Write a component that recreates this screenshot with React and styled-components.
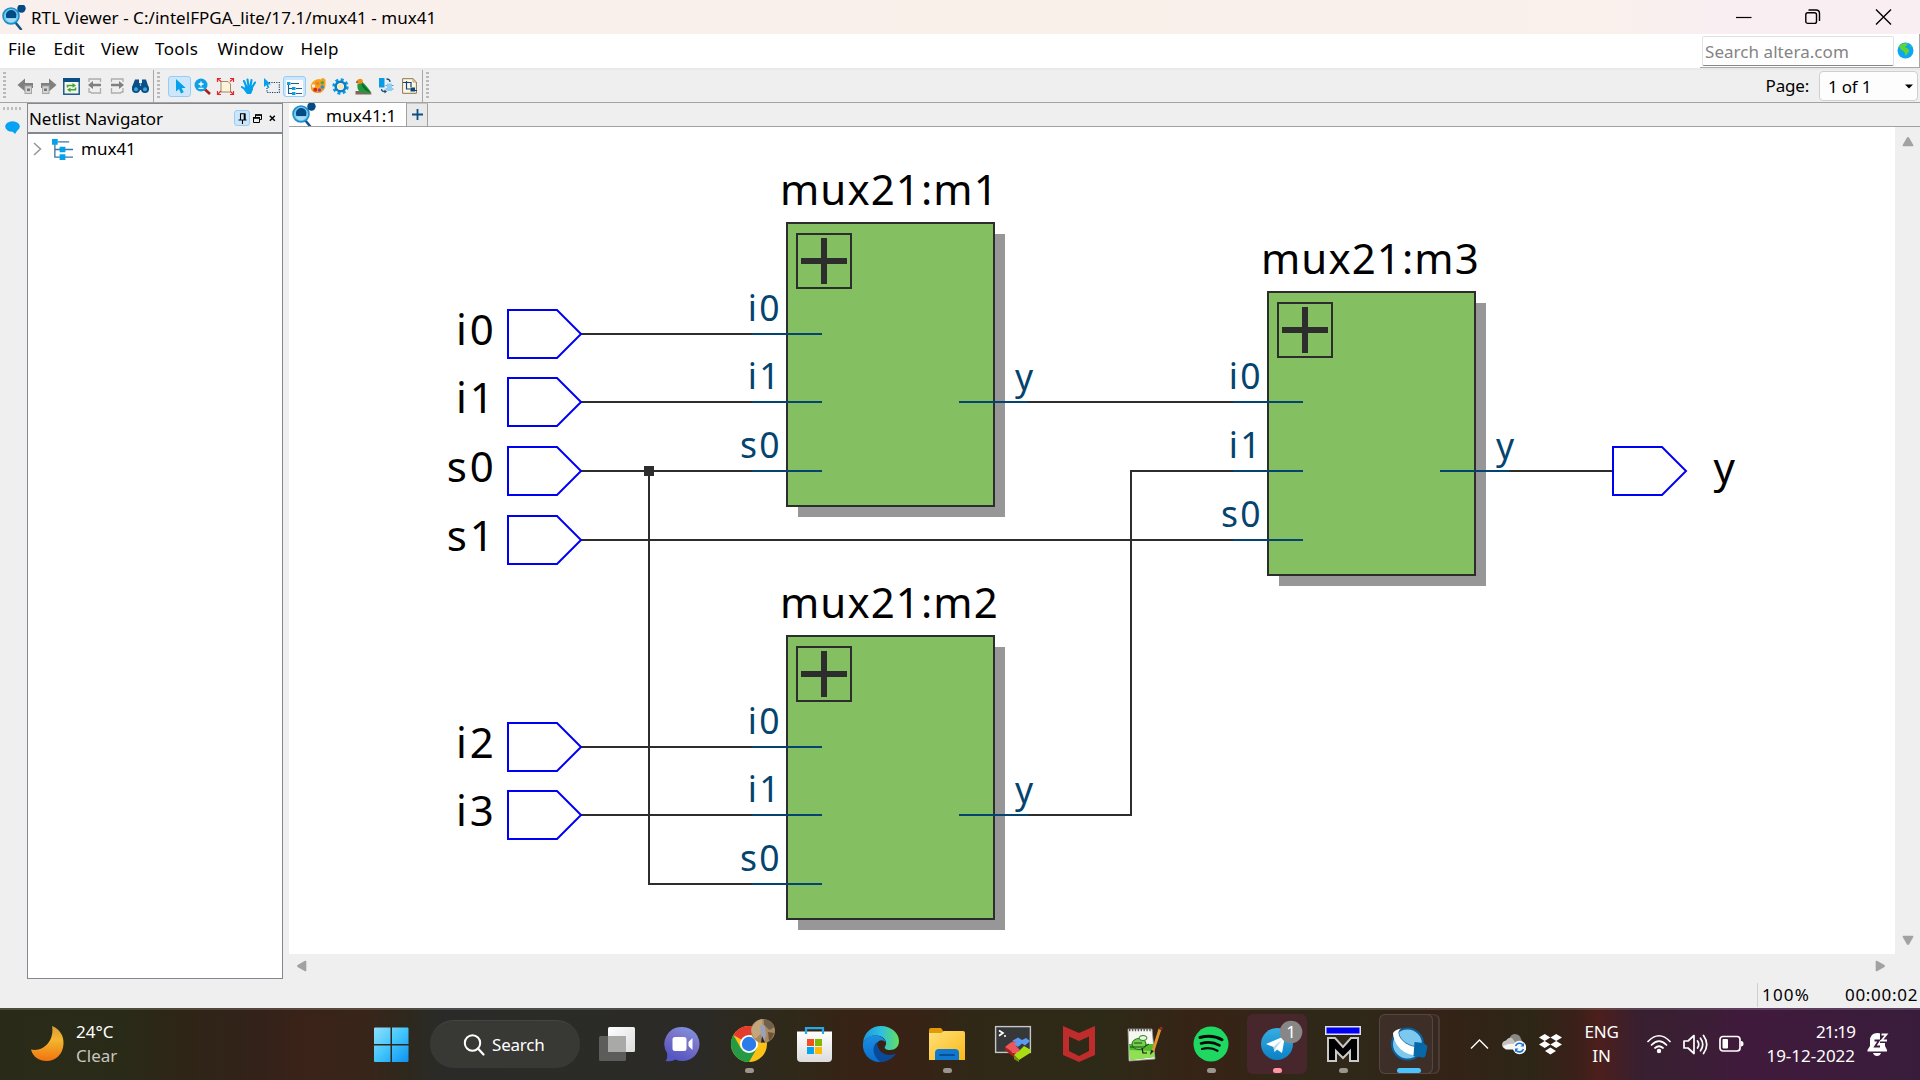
import React from "react";
import styled, { createGlobalStyle } from "styled-components";

const GlobalStyle = createGlobalStyle`
  * { box-sizing: border-box; }
  body { margin: 0; background: #efefef; overflow: hidden; }
`;

const Desktop = styled.div`
  width: 1920px;
  height: 1080px;
  display: flex;
  flex-direction: column;
  background: #efefef;
  color: #000;
  font-family: "Noto Sans", "Open Sans", sans-serif;
  font-size: 17px;
  line-height: 24px;
  white-space: pre;
  overflow: hidden;
  svg { display: block; flex: none; }
`;

/* ---------- title bar ---------- */
const TitleBar = styled.header`
  height: 34px;
  display: flex;
  align-items: center;
  padding: 1px 28px 0 2px;
  background: linear-gradient(90deg, #f9f0ed 0%, #faf0ea 55%, #faf0ec 84%, #f9eef2 90%, #f9eef2 100%);
`;
const Title = styled.h1`
  margin: 0 auto 0 4px;
  font-size: 17px;
  font-weight: 400;
  letter-spacing: 0.05px;
`;
const WindowControls = styled.div`
  display: flex;
  align-items: center;
  gap: 53px;
`;

/* ---------- menu bar ---------- */
const MenuBar = styled.nav`
  height: 36px;
  display: flex;
  justify-content: space-between;
  background: #fff;
  border-bottom: 2px solid #e9e9e9;
`;
const Menus = styled.div`
  display: flex;
  padding: 3px 0 0 8px;
`;
const MenuItem = styled.span`
  width: ${(p) => p.$w}px;
  letter-spacing: ${(p) => p.$ls || 0}px;
`;
const SearchArea = styled.div`
  width: 220px;
  height: 34px;
  display: flex;
  align-items: center;
  gap: 3px;
  padding: 0 0 0 2px;
  border-right: 1px solid #a8a8a8;
  border-bottom: 1px solid #a8a8a8;
`;
const SearchField = styled.div`
  width: 192px;
  height: 30px;
  padding: 3px 0 0 2px;
  color: #848484;
  line-height: 24px;
  letter-spacing: 0.05px;
  border: 1px solid #e2e2e2;
  border-bottom-color: #868686;
  border-radius: 2px;
`;

/* ---------- tool bar ---------- */
const ToolBar = styled.div`
  height: 33px;
  display: flex;
  border-bottom: 1px solid #a3a3a3;
`;
const ToolGroup = styled.div`
  display: flex;
  align-items: center;
  padding: 0 1px 0 3px;
  border-right: ${(p) => (p.$open ? "0" : "1px solid #a8a8a8")};
`;
const Grip = styled.i`
  width: 3px;
  height: 28px;
  margin-right: ${(p) => p.$after}px;
  background: repeating-linear-gradient(180deg, #b9b9b9 0 2px, transparent 2px 4px);
`;
const ToolButton = styled.div`
  width: 23px;
  height: 21px;
  display: grid;
  place-items: center;
  border-radius: 3px;
  border: 1px solid ${(p) => (p.$on ? "#99ccf5" : "transparent")};
  background: ${(p) => (p.$on ? "#cce6fb" : "transparent")};
`;
const PagePicker = styled.div`
  margin-left: auto;
  display: flex;
  align-items: center;
  gap: 10px;
  padding-right: 2px;
  letter-spacing: -0.2px;
`;
const PageSelect = styled.div`
  width: 99px;
  height: 30px;
  display: flex;
  align-items: center;
  justify-content: space-between;
  padding: 1px 4px 0 8px;
  background: #fdfdfd;
  border: 1px solid #cfcfcf;
  border-radius: 4px;
`;

/* ---------- work area ---------- */
const WorkArea = styled.main`
  height: 876px;
  display: flex;
`;
const Rail = styled.aside`
  width: 27px;
  padding: 4px 3px 0;
  display: flex;
  flex-direction: column;
  gap: 11px;
`;
const RailGrip = styled.i`
  width: 19px;
  height: 3px;
  background: repeating-linear-gradient(90deg, #bdbdbd 0 2px, transparent 2px 4px);
`;
const RailButton = styled.div`
  padding-left: 2px;
`;
const Dock = styled.section`
  width: 256px;
  margin-right: 6px;
  display: flex;
  flex-direction: column;
  background: #fff;
  border: 1px solid #828790;
`;
const DockHeader = styled.div`
  height: 30px;
  display: flex;
  align-items: center;
  padding: 1px 2px 0 1px;
  background: #efefef;
  border-bottom: 2px solid #828790;
  letter-spacing: -0.06px;
`;
const DockTitle = styled.span`
  margin-right: auto;
`;
const DockButton = styled.div`
  width: ${(p) => p.$w}px;
  height: 16px;
  display: grid;
  place-items: center;
  margin-bottom: 1px;
  border-radius: 3px;
  border: 1px solid ${(p) => (p.$on ? "#99ccf5" : "transparent")};
  background: ${(p) => (p.$on ? "#cce6fb" : "transparent")};
`;
const TreeRow = styled.div`
  height: 30px;
  display: flex;
  align-items: center;
  padding-left: 5px;
`;
const TreeIcon = styled.span`
  margin: 0 8px 0 10px;
`;
const Editor = styled.section`
  flex: 1;
  display: flex;
  flex-direction: column;
`;
const TabBar = styled.div`
  height: 24px;
  display: flex;
  border-bottom: 1px solid #a0a0a0;
`;
const Tab = styled.div`
  width: 118px;
  display: flex;
  align-items: center;
  padding: 2px 0 0 3px;
  gap: 9px;
  background: #fff;
  border-right: 1px solid #a0a0a0;
  letter-spacing: 0.2px;
  overflow: hidden;
`;
const AddTab = styled.div`
  width: 21px;
  display: grid;
  place-items: center;
  padding-bottom: 2px;
  background: #e9e9e9;
  border-right: 1px solid #a0a0a0;
  border-top: 1px solid #c4c4c4;
`;
const Viewport = styled.div`
  height: 827px;
  display: flex;
`;
const Canvas = styled.div`
  width: 1606px;
  background: #fff;
  text { font-family: "Noto Sans", "Open Sans", sans-serif; }
`;
const VScroll = styled.div`
  width: 25px;
  display: flex;
  flex-direction: column;
  align-items: center;
  justify-content: space-between;
  padding: 9px 0 8px;
`;
const HScroll = styled.div`
  width: 1606px;
  height: 25px;
  display: flex;
  align-items: center;
  justify-content: space-between;
  padding: 0 9px 1px 7px;
`;
const StatusBar = styled.footer`
  height: 29px;
  display: flex;
  align-items: center;
  justify-content: flex-end;
  padding-top: 2px;
`;
const StatusCell = styled.span`
  width: ${(p) => p.$w}px;
  padding-left: 4px;
  letter-spacing: ${(p) => p.$ls || 0}px;
  border-left: 1px solid ${(p) => (p.$line ? "#cfcfcf" : "transparent")};
`;

/* ---------- task bar ---------- */
const TaskBar = styled.div`
  height: 72px;
  display: flex;
  align-items: center;
  color: #fff;
  border-top: 2px solid rgba(255, 255, 255, 0.16);
  background: linear-gradient(90deg,
    #292b18 0, #2a2a18 125px, #2e2516 180px, #33221a 260px, #3a2218 300px, #38251a 370px, #2e281d 405px,
    #2a2b28 440px, #2b2a27 690px, #2f2919 790px, #372315 850px, #382216 905px, #302817 970px,
    #2e2a18 1100px, #372315 1210px, #2f2818 1300px, #2f2818 1360px, #352217 1430px, #2d2616 1530px,
    #3a2019 1575px, #4c1f1c 1598px, #381f30 1640px, #3b1e35 1700px, #401a3c 1740px, #391c3b 1920px) 0 -2px / 100% 72px border-box;
`;
const Weather = styled.div`
  width: 374px;
  display: flex;
  align-items: center;
  padding: 0 0 3px 30px;
  gap: 11px;
`;
const Stack = styled.div`
  width: ${(p) => (p.$w ? p.$w + "px" : "auto")};
  display: flex;
  flex-direction: column;
  text-align: ${(p) => p.$align || "left"};
  letter-spacing: ${(p) => p.$ls || 0}px;
`;
const Muted = styled.span`
  color: #c8c6bd;
`;
const Tight = styled.span`
  letter-spacing: -0.9px;
`;
const SearchPill = styled.div`
  width: 150px;
  height: 48px;
  margin: 0 4px 2px 21px;
  display: flex;
  align-items: center;
  gap: 7px;
  padding-left: 33px;
  letter-spacing: -0.2px;
  border-radius: 24px;
  background: #383834;
  border-top: 1px solid #454541;
`;
const Apps = styled.div`
  display: flex;
  height: 70px;
`;
const AppCell = styled.div`
  width: 66px;
  height: 60px;
  margin: 4px 0 0;
  display: grid;
  justify-items: center;
  align-content: end;
`;
const AppTile = styled.div`
  width: 60px;
  height: 60px;
  display: grid;
  justify-items: center;
  align-content: end;
  gap: 6px;
  padding-bottom: 1px;
  border-radius: 6px;
  background: ${(p) => p.$bg || "transparent"};
`;
const StackedTile = styled(AppTile)`
  width: 54px;
  margin-right: 7px;
  border: 1px solid rgba(255, 255, 255, 0.12);
  box-shadow: 6px 0 0 -1px #372921, 7px 0 0 0 #4a3b33;
  padding: 0 0 0 6px;
`;
const Running = styled.i`
  width: ${(p) => p.$w || 9}px;
  height: 5px;
  border-radius: 3px;
  background: ${(p) => p.$c || "#9c958e"};
`;
const Tray = styled.div`
  flex: 1;
  display: flex;
  align-items: center;
  padding: 0 30px 0 28px;
`;
const TrayItem = styled.div`
  width: ${(p) => p.$w}px;
  margin-bottom: ${(p) => p.$lift || 2}px;
`;

/* ---------- icons ---------- */
const RtlIcon = ({ s = 25 }) => (
  <svg width={s} height={s} viewBox="0 0 25 25">
    <path d="M12 8L20 4" stroke="#12508a" strokeWidth="2" />
    <path d="M13 17l6.500 8" stroke="#12508a" strokeWidth="2.400" />
    <circle cx="19.500" cy="3.500" r="4.200" fill="#044a85" />
    <circle cx="9" cy="11" r="8" fill="#72c6ee" stroke="#1d8fc8" strokeWidth="1.600" />
    <path d="M4 11a5.200 5.200 0 0 1 10.400-1.500l-.4 3.500H4.400z" fill="#044a85" />
    <path d="M3.500 13.500a6 6 0 0 0 11 0z" fill="#a5ddf6" />
  </svg>
);
const BackIcon = ({ flip }) => (
  <svg width="17" height="16" viewBox="0 0 17 16" transform={flip ? "scale(-1 1)" : undefined}>
    <path d="M.5 7L8 .5v4.500h8v5H8v3.500z" fill="#808080" />
    <rect x="8" y="8" width="6.500" height="7.500" fill="#d4d4d4" stroke="#a6a6a6" />
    <rect x="10" y="10.500" width="3" height="2.500" fill="#777" />
  </svg>
);
const PageArrow = ({ flip }) => (
  <svg width="15" height="16" viewBox="0 0 15 16" transform={flip ? "scale(-1 1)" : undefined}>
    <path d="M2 4V1h11.500v3M2 10v4h1.500l1 1h9v-5" fill="none" stroke="#adadad" strokeWidth="1.300" />
    <path d="M1 7l5-4v2.700h8v2.600H6V11z" fill="#808080" />
  </svg>
);
const RefreshIcon = () => (
  <svg width="17" height="17" viewBox="0 0 17 17">
    <rect x=".8" y=".8" width="15.400" height="15.400" fill="#f3f8ee" stroke="#0b4f86" strokeWidth="1.400" />
    <rect width="17" height="4" fill="#0b4f86" />
    <path d="M4.500 9.500V7.500h6" fill="none" stroke="#46a035" strokeWidth="1.600" />
    <path d="M9.500 5l3.500 2.500-3.500 2.300z" fill="#46a035" />
    <path d="M12.500 9.500v2.300h-6" fill="none" stroke="#46a035" strokeWidth="1.600" />
    <path d="M7.500 9.500L4 11.800l3.500 2.400z" fill="#46a035" />
  </svg>
);
const BinocularsIcon = () => (
  <svg width="17" height="16" viewBox="0 0 17 16">
    <path d="M3 1.500h4V5h3V1.500h4L16.500 9v3H0V9z" fill="#0b4f86" />
    <circle cx="4" cy="11" r="4" fill="#0b4f86" />
    <circle cx="13" cy="11" r="4" fill="#0b4f86" />
    <circle cx="4" cy="11.300" r="2" fill="#3fa5df" />
    <circle cx="13" cy="11.300" r="2" fill="#3fa5df" />
    <path d="M8.500 5v3" stroke="#6fbbe6" strokeWidth="1.300" />
  </svg>
);
const PointerIcon = () => (
  <svg width="14" height="16" viewBox="0 0 14 16">
    <path d="M3 1v12.500l3-2.600 2 4.600 2.700-1.200-2-4.300h4z" fill="#03a0ee" />
  </svg>
);
const ZoomIcon = () => (
  <svg width="17" height="17" viewBox="0 0 17 17">
    <path d="M10.500 11l5.500 5" stroke="#b01c1c" strokeWidth="2.600" />
    <circle cx="7" cy="7" r="6.500" fill="#0f9fe5" />
    <path d="M4.500 6h5M7 3.500v5M4.500 10.300h5" stroke="#fff" strokeWidth="1.300" />
  </svg>
);
const FitIcon = () => (
  <svg width="17" height="17" viewBox="0 0 17 17" overflow="visible">
    <path d="M4 3.500h7l2.500 2.500v8H4z" fill="#fff3dc" stroke="#a18a62" />
    <path d="M.5 4V.5H4M13 .5h3.500V4M16.500 13v3.500H13M4 16.500H.5V13M.5 .5l3.500 3M16.500 .5l-3.500 3M16.500 16.500l-3-3M.5 16.500l3.500-3.500" fill="none" stroke="#e8262d" strokeWidth="1.200" />
  </svg>
);
const HandIcon = () => (
  <svg width="17" height="17" viewBox="0 0 17 17">
    <g fill="none" stroke="#04a0ec" strokeWidth="2.100" strokeLinecap="round">
      <path d="M4 3l2.500 6M7.500 1.500L8.500 8M11.500 2L10.500 8M15 4.500l-3 5M2 9l4 3" />
    </g>
    <path d="M5 8l7.500-.5.500 4-2 4.500H7L4 12z" fill="#04a0ec" />
  </svg>
);
const SelectIcon = () => (
  <svg width="17" height="17" viewBox="0 0 17 17">
    <path d="M6 4.500h10.300v10H4V9" fill="none" stroke="#123d66" strokeWidth="1.100" strokeDasharray="1.200 1.200" />
    <path d="M1 0v9l2.300-2 1.400 3.300 1.700-.8-1.400-3H8z" fill="#03a0ee" />
  </svg>
);
const HierarchyIcon = () => (
  <svg width="21" height="21" viewBox="0 0 22 22">
    <path d="M3 4v15h8M3 11h8M6 3h12M12 11h10M12 19h10" fill="none" stroke="#41779f" strokeWidth="1.400" />
    <path d="M0 0h6v6H0zM8 8h6v6H8zM8 16h6v6H8z" fill="#04a2ea" />
  </svg>
);
const SmallHierarchyIcon = () => (
  <svg width="17" height="15" viewBox="0 0 17 15" overflow="visible">
    <rect x="0" y="1" width="17" height="16" fill="#fff" />
    <path d="M2.500 4v10.500h4M2.500 9.500h4M5 4.500h8M10 9.500h6M10 14.500h6" fill="none" stroke="#1d5c8d" strokeWidth="1.100" />
    <path d="M1 3h3.500v3H1zM6 8h3.500v3H6zM6 13h3.500v3H6z" fill="#04a2ea" />
  </svg>
);
const PaletteIcon = () => (
  <svg width="16" height="16" viewBox="0 0 16 16" overflow="visible">
    <path d="M9.500 1C5 .8.500 4.500.8 9.500c.3 4 4.200 6 8.200 5.500 4.500-.6 6.500-4.500 6.500-8.500V2Q14-.5 12 .3 10 2.500 9.500 1z" fill="#f6a01c" />
    <circle cx="3.500" cy="8" r="1.700" fill="#fff4df" />
    <circle cx="5.300" cy="11.700" r="2" fill="#d8281d" />
    <circle cx="7.500" cy="5.500" r="1.800" fill="#ee7e2a" />
    <circle cx="9.500" cy="12" r="1.700" fill="#8a3fa8" />
    <circle cx="12.300" cy="9" r="1.800" fill="#2b8ad8" />
    <circle cx="12.300" cy="4.800" r="1.700" fill="#55a53a" />
  </svg>
);
const GearIcon = () => (
  <svg width="17" height="17" viewBox="0 0 17 17">
    <circle cx="8.500" cy="8.500" r="6.700" fill="none" stroke="#0a9ae6" strokeWidth="3" strokeDasharray="2.900 2.360" />
    <circle cx="8.500" cy="8.500" r="4.800" fill="#fff" stroke="#0a7fc6" strokeWidth="2.600" />
    <circle cx="8.500" cy="8.500" r="2.800" fill="#fbe6b4" />
  </svg>
);
const ParrotIcon = () => (
  <svg width="17" height="17" viewBox="0 0 17 17" overflow="visible">
    <path d="M.5 13h9l7 2.500v1H.5z" fill="#83685a" />
    <path d="M2.500 5.500C2 10 3 14 7 14.500c3 .5 7 .8 9.500.5C14 11 11 7 7.500 4z" fill="#1d9a3e" />
    <path d="M7 5l8.500 9.500Q10 13 7 8z" fill="#0e6b2c" />
    <path d="M2 2.500Q4-.3 7 1.300 8.500 3 7.500 5L3 6.500z" fill="#f08a1c" />
    <path d="M2 2.500L.8 5 3 4.500z" fill="#5b3a22" />
  </svg>
);
const SwapIcon = () => (
  <svg width="15" height="16" viewBox="0 0 15 16" overflow="visible">
    <path d="M0 0h5.500v9.500H0z" fill="#0b9be6" />
    <path d="M8 5.500h5V13H8z" fill="#8ccff3" />
    <path d="M6.500 7.500h8M6.500 11h8" stroke="#4b9cc9" strokeDasharray="1.500 5" />
    <path d="M7.500 1c2.500 0 3.500 1 3.500 3M6 13.500c-2.500 0-3.500-.5-3.500-2.500" fill="none" stroke="#164f80" strokeWidth="1.300" />
    <path d="M5.500 11.500l2.500 2-2.500 2z" fill="#164f80" />
  </svg>
);
const NetIcon = () => (
  <svg width="15" height="16" viewBox="0 0 15 16">
    <path d="M.6.700h10.400L14.400 4v11.300H.6z" fill="#fff6e3" stroke="#8d7650" />
    <path d="M1 4.500h3.500M4.500 3v8h4M5 4.500h4V9M9 12.500h6" fill="none" stroke="#0a4677" strokeWidth="1.200" />
    <path d="M8.500 9.500h4.500v4H8.500z" fill="#0a4677" />
    <path d="M11 1v3h3" fill="none" stroke="#b89a66" />
  </svg>
);
const GlobeIcon = () => (
  <svg width="17" height="17" viewBox="0 0 17 17">
    <circle cx="8.500" cy="8.500" r="8" fill="#0ca6f2" />
    <path d="M2 4.500C4 1.500 8 .5 11 1.500L9.500 4 7.500 5l4 2 .5 2.500L8.500 14l-1-4L4 7.500z" fill="#62d52c" />
    <path d="M12.500 3l2 1.500-.5 1z" fill="#62d52c" />
  </svg>
);
const BubbleIcon = () => (
  <svg width="15" height="13" viewBox="0 0 15 13">
    <ellipse cx="7.500" cy="5.500" rx="7.300" ry="5.200" fill="#06a3f5" />
    <path d="M7 10h5l-2 3z" fill="#06a3f5" />
  </svg>
);
const Triangle = ({ dir }) => {
  const turn = { up: 0, right: 90, down: 180, left: 270 }[dir];
  return (
    <svg width="12" height="12" viewBox="0 0 12 12">
      <path d="M5 1.500L.7 9q-.3 1.300.8 1.300h9q1.100 0 .8-1.300L7 1.500Q6 .6 5 1.500z" fill="#a2a2a2" transform={`rotate(${turn} 6 6)`} />
    </svg>
  );
};

/* ---------- schematic ---------- */
const INK = "#2d2d2d";
const PORT = "#04446f";

const BlockName = styled.text`
  font-size: 42px;
  letter-spacing: 1.1px;
`;
const PinName = styled.text`
  font-size: 42px;
  letter-spacing: 2.8px;
`;
const PortName = styled.text`
  font-size: 35.5px;
  letter-spacing: 2.4px;
  fill: ${PORT};
`;

const Block = ({ x, y, w, name, titleX, inputs }) => (
  <g>
    <rect x={x + 11} y={y + 11} width={w} height="283" fill="#979797" />
    <rect x={x} y={y} width={w} height="283" fill="#84c061" stroke={INK} strokeWidth="2" />
    <rect x={x + 10} y={y + 11} width="54" height="54" fill="none" stroke={INK} strokeWidth="2" />
    <rect x={x + 14} y={y + 35} width="46" height="6" fill={INK} />
    <rect x={x + 34} y={y + 15} width="6" height="46" fill={INK} />
    <BlockName x={titleX} y={y - 18}>{name}</BlockName>
    {["i0", "i1", "s0"].map((label, i) => (
      <g key={label}>
        <path d={`M${x - 35} ${inputs[i]}h70`} stroke={PORT} strokeWidth="2" />
        <PortName x={x - 5} y={inputs[i] - 13} textAnchor="end">{label}</PortName>
      </g>
    ))}
    <path d={`M${x + w - 35} ${inputs[1]}h69`} stroke={PORT} strokeWidth="2" />
    <PortName x={x + w + 21} y={inputs[1] - 12}>y</PortName>
  </g>
);
const Pin = ({ x, y }) => (
  <path d={`M${x} ${y - 24}h49l24 24-24 24h-49z`} fill="#fff" stroke="#0000f5" strokeWidth="2" />
);
const pins = [["i0", 334], ["i1", 402], ["s0", 471], ["s1", 540], ["i2", 747], ["i3", 815]];

const Schematic = () => (
  <svg width="1606" height="827" viewBox="289 127 1606 827">
    <path
      d="M581 334H752M581 402H752M581 471H752M581 540H1234M581 747H752M581 815H752M649 471V884H752M1028 402H1234M1028 815H1131V471H1234M1509 471H1613"
      fill="none" stroke={INK} strokeWidth="2"
    />
    <rect x="644" y="466" width="10" height="10" fill={INK} />
    <Block x={787} y={223} w={207} name="mux21:m1" titleX={780} inputs={[334, 402, 471]} />
    <Block x={787} y={636} w={207} name="mux21:m2" titleX={780} inputs={[747, 815, 884]} />
    <Block x={1268} y={292} w={207} name="mux21:m3" titleX={1261} inputs={[402, 471, 540]} />
    {pins.map(([label, y]) => (
      <g key={label}>
        <Pin x={508} y={y} />
        <PinName x="496.500" y={y + 11} textAnchor="end">{label}</PinName>
      </g>
    ))}
    <Pin x={1613} y={471} />
    <PinName x="1713.500" y="483">y</PinName>
  </svg>
);

/* ---------- taskbar icons ---------- */
const App36 = ({ children }) => (
  <svg width="36" height="36" viewBox="0 0 36 36" overflow="visible">{children}</svg>
);
const TaskViewIcon = () => (
  <App36>
    <defs><linearGradient id="tv" x2="1" y2="1"><stop stopColor="#fff" /><stop offset="1" stopColor="#dcdcdc" /></linearGradient></defs>
    <rect x="9" y="1" width="27" height="25" rx="1.500" fill="url(#tv)" />
    <rect x="0" y="10" width="27" height="25" rx="1.500" fill="#5c5c5a" />
    <path d="M9 10h18v16H9z" fill="#a9a9a8" />
  </App36>
);
const ChatIcon = () => (
  <App36>
    <defs><linearGradient id="ch" x1="1" y1="0" x2=".5" y2="1"><stop stopColor="#7d9be6" /><stop offset=".5" stopColor="#7a72c8" /><stop offset="1" stopColor="#5557c4" /></linearGradient></defs>
    <path d="M17.500 1a17 17 0 1 1-7 32.500Q6.500 36 .5 35q2.500-3 1.500-8A17 17 0 0 1 17.500 1z" fill="url(#ch)" />
    <rect x="7.500" y="11" width="14" height="14" rx="2.500" fill="#fff" />
    <path d="M23.500 16l4-4v12l-4-4z" fill="#fff" />
  </App36>
);
const ChromeIcon = () => (
  <App36>
    <circle cx="18" cy="18" r="18" fill="#fbc116" />
    <path d="M18 18L2.400 9A18 18 0 0 1 33.600 9H18z" fill="#e33b2e" />
    <path d="M2.400 9A18 18 0 0 0 18 36l7.800-13.500L10 22.500z" fill="#269a43" />
    <circle cx="18" cy="18" r="9" fill="#fff" />
    <circle cx="18" cy="18" r="7.200" fill="#2a7de9" />
    <circle cx="32" cy="5" r="12" fill="#a98960" />
    <path d="M20.500 2Q24-5 31-7l1 13-8 7q-4-5-3.500-11z" fill="#c3a67c" />
    <path d="M33-7q8 1 10.500 8l-5 3-5.500-5z" fill="#71614b" />
    <path d="M29 0q3-3 5 0l1 9-2 8h-2z" fill="#9aa1b8" />
    <path d="M31 10l3 6.500h-4z" fill="#33251b" />
    <path d="M37 6l6 1q-1 5-5 8z" fill="#6d5438" />
  </App36>
);
const StoreIcon = () => (
  <App36>
    <defs><linearGradient id="st" x2="0" y2="1"><stop stopColor="#fff" /><stop offset="1" stopColor="#dcdcdc" /></linearGradient></defs>
    <path d="M0 5.500h35V32q0 4-4 4H4q-4 0-4-4z" fill="url(#st)" />
    <path d="M9 8V2.200h17V8" fill="none" stroke="#27a8e8" strokeWidth="2.200" />
    <path d="M10 13h7v7h-7z" fill="#f25022" /><path d="M18 13h7v7h-7z" fill="#7fba00" />
    <path d="M10 21h7v7h-7z" fill="#00a4ef" /><path d="M18 21h7v7h-7z" fill="#ffb900" />
  </App36>
);
const EdgeIcon = () => (
  <App36>
    <defs>
      <linearGradient id="eg" x1="0" y1=".4" x2="1" y2=".4"><stop stopColor="#1b96de" /><stop offset=".5" stopColor="#2fbfe0" /><stop offset="1" stopColor="#62e05c" /></linearGradient>
      <linearGradient id="eb" x2="0" y2="1"><stop stopColor="#1b8fe0" /><stop offset="1" stopColor="#0a6dd0" /></linearGradient>
    </defs>
    <path d="M0 17C1 6 9 0 18 0c10 0 18 7 18 15 0 6-4 9-9 9-4 0-6-1.500-5-3.500 3-4 0-10-8-11C8 9 3 11 0 17z" fill="url(#eg)" />
    <path d="M0 17C3 11 8 8.500 14 9.500c5 .8 8 3.500 8.500 7-2-3-7-3-8.500 1-2 6 4 15 12 14-3 3-6 4.500-9 4.500C7 36-1 28 0 17z" fill="url(#eb)" />
    <path d="M14 16c-6 5-4 14 3 20 8 0 13-4 16-8.500-7 3-14 1-17-4.500-1.500-3-2-5-2-7z" fill="#0b4a98" />
  </App36>
);
const FolderIcon = () => (
  <App36>
    <defs><linearGradient id="fo" x2="1" y2="1"><stop stopColor="#ffe07a" /><stop offset="1" stopColor="#fbb917" /></linearGradient></defs>
    <path d="M0 4q0-2 2-2h10l3 4v8H0z" fill="#e09b06" />
    <path d="M0 7h12l3-2h19q2 0 2 2v27H0z" fill="url(#fo)" />
    <path d="M6 34v-7q0-4 4-4h16q4 0 4 4v7z" fill="#0f79cf" />
    <path d="M11 29h14" stroke="#0a4d94" strokeWidth="1.800" strokeLinecap="round" />
  </App36>
);
const TerminalIcon = () => (
  <App36>
    <rect x=".6" y=".6" width="34.800" height="25.800" fill="#353739" stroke="#c5c7c8" strokeWidth="1.400" />
    <path d="M4 4.500l4 2.500-4 2.800M9 10h2" fill="none" stroke="#fff" strokeWidth="1.700" />
    <path d="M15 17l6-3 3 3-3 3 4 4-5 4-10-7z" fill="#ef5558" />
    <path d="M10 21l12 9v4L10 24z" fill="#b31c1c" />
    <path d="M17 15l6-3.500 4 2.500 4-2 4 3-5 4.500-3-2-4 3.500-4-3 3-2z" fill="#5a9af0" />
    <path d="M19 29l5-4 5-5 7 4-1 3-11 7z" fill="#a9dd12" />
    <path d="M19 30l5 4v2l-5-3z" fill="#6e9c04" />
  </App36>
);
const McAfeeIcon = () => (
  <App36>
    <path d="M2 0l16 7L34 0v29L18 36 2 29zM8 10.500v14.500l10 5 10-5V10.500l-10 4.500z" fill="#bf2c2c" fillRule="evenodd" />
  </App36>
);
const NotepadIcon = () => (
  <App36>
    <path d="M1 3h24l3 30-26 2z" fill="#f7f7f2" stroke="#999" strokeWidth=".8" />
    <path d="M2 18h24l1.500 13L3 34z" fill="#4fba2c" />
    <path d="M2 24l25 1 .5 6L3 34z" fill="#8fe052" />
    <path d="M2 4h22" stroke="#555" strokeWidth="2.500" strokeDasharray="1.400 1.500" />
    <ellipse cx="12" cy="18" rx="7" ry="5.500" fill="#76cf4b" stroke="#266b25" />
    <ellipse cx="16" cy="12" rx="4" ry="2.500" fill="#e6f9d8" stroke="#2c7a31" />
    <path d="M3 21h14l5-3M7 17h8" stroke="#18481c" fill="none" />
    <path d="M33 3l-7 22" stroke="#e1972e" strokeWidth="2.800" />
    <path d="M34.500 1l-1 3" stroke="#8f2a2a" strokeWidth="2.800" />
    <path d="M24 24l-1 5 4-4z" fill="#222" />
    <path d="M15 22l1 5h4" fill="none" stroke="#111" strokeWidth="1.200" />
  </App36>
);
const SpotifyIcon = () => (
  <App36>
    <circle cx="18" cy="18" r="17.500" fill="#1fd862" />
    <g fill="none" stroke="#0a0a0a" strokeLinecap="round">
      <path d="M7 11.500q12-3.500 22 2.200" strokeWidth="3" />
      <path d="M8 17.500q10-3 18.500 1.800" strokeWidth="2.600" />
      <path d="M9 23q8.500-2.300 15.500 1.800" strokeWidth="2.200" />
    </g>
  </App36>
);
const BadgeLabel = styled.text`
  font: 400 17px "Noto Sans", sans-serif;
`;
const TelegramIcon = () => (
  <App36>
    <defs><linearGradient id="tg" x2="0" y2="1"><stop stopColor="#36aee2" /><stop offset="1" stopColor="#0c80c4" /></linearGradient></defs>
    <circle cx="18" cy="18" r="16" fill="url(#tg)" />
    <path d="M7 18l19-8-3 17-5-3.500-2.500 2.500-1-5z" fill="#fff" />
    <path d="M14.500 21L23 13.500l-6.500 9-1 3.500z" fill="#b6d9ee" />
    <circle cx="32" cy="6" r="11.300" fill="#878787" />
    <BadgeLabel x="32" y="12" fill="#fff" textAnchor="middle">1</BadgeLabel>
  </App36>
);
const ModelIcon = () => (
  <App36>
    <rect x="0" y="0" width="36" height="9" fill="#dedede" />
    <rect x="1.500" y="1.500" width="33" height="6" fill="#0000f5" />
    <path d="M3 12h7l8 9 8-9h7v23h-8V25l-7 7-7-7v10H3z" fill="#000" stroke="#c9c9c9" strokeWidth="2" />
  </App36>
);
const QuartusIcon = () => (
  <App36>
    <circle cx="16.500" cy="18" r="15.500" fill="#7cc8ee" stroke="#0d5f9c" strokeWidth="2" />
    <path d="M2 7Q4 3.500 10 2.500 7 5 8.500 9.500 12 18 24 20.500v9Q12 28 6 19 2 12 2 7z" fill="#fff" />
    <path d="M9.500 3Q6.500 6 8.500 10q4 8 15 10.500" fill="none" stroke="#0d5f9c" strokeWidth=".8" />
    <path d="M23.500 16l9 1 4 3-2 10q-1 2-3 1.500l-9-1.500z" fill="#0668a8" />
  </App36>
);

const apps = [
  { id: "taskview", Icon: TaskViewIcon },
  { id: "chat", Icon: ChatIcon },
  { id: "chrome", Icon: ChromeIcon, run: true },
  { id: "store", Icon: StoreIcon },
  { id: "edge", Icon: EdgeIcon },
  { id: "files", Icon: FolderIcon, run: true },
  { id: "terminal", Icon: TerminalIcon },
  { id: "mcafee", Icon: McAfeeIcon },
  { id: "notepad", Icon: NotepadIcon },
  { id: "spotify", Icon: SpotifyIcon, run: true },
  { id: "telegram", Icon: TelegramIcon, run: true, color: "#ff97a3", tile: "#47272b" },
  { id: "model", Icon: ModelIcon, run: true },
];

const BellBox = styled.div`
  padding-left: 12px;
`;
const Bell = () => (
  <BellBox>
    <svg width="22" height="24" viewBox="0 0 22 24">
      <path d="M10.500 1Q3 1 3 9v5l-2.500 4v1.500H20V18l-2-4V9Q18 1 10.500 1z" fill="#fff" />
      <path d="M6 21h8q-1 3-4 3t-4-3z" fill="#fff" />
      <path d="M13 0h9v11h-9z" fill="#3d1c3b" />
      <path d="M14.500 2.500h5l-5 6h5.500M8 9h4.500L8 14.500h5" fill="none" stroke="#fff" strokeWidth="1.800" />
      <path d="M7.500 8.500H12L8 14.500h5" fill="none" stroke="#3d1c3b" strokeWidth="1.800" />
    </svg>
  </BellBox>
);

const Taskbar = () => (
  <TaskBar>
    <Weather>
      <svg width="35" height="37" viewBox="0 0 35 37">
        <defs><linearGradient id="mn" x2="0" y2="1"><stop stopColor="#d99a3c" /><stop offset=".4" stopColor="#f3b62e" /><stop offset="1" stopColor="#f0730f" /></linearGradient></defs>
        <path d="M22 1c8 3 12 10 11.500 18C33 29 26 36 16.500 36 9 36 3 32 1 24.500c11 3 24-8 21-23.500z" fill="url(#mn)" />
      </svg>
      <Stack><span>24°C</span><Muted>Clear</Muted></Stack>
    </Weather>
    <svg width="35" height="37" viewBox="0 0 35 37">
      <defs><linearGradient id="wn" x2="1" y2="1"><stop stopColor="#8fe0fc" /><stop offset=".5" stopColor="#42c5fa" /><stop offset="1" stopColor="#0c91f2" /></linearGradient></defs>
      <path d="M0 1.500Q0 .500 1 .500h15.500v16.500H0zM18 .500h15.500q1 0 1 1V17H18zM0 18.500h16.500V35H1q-1 0-1-1zM18 18.500h16.500V34q0 1-1 1H18z" fill="url(#wn)" />
    </svg>
    <SearchPill>
      <svg width="22" height="22" viewBox="0 0 22 22">
        <circle cx="9.500" cy="9" r="7.700" fill="none" stroke="#fff" strokeWidth="2" />
        <path d="M15 14.500l5.500 6" stroke="#fff" strokeWidth="2.200" strokeLinecap="round" />
      </svg>
      Search
    </SearchPill>
    <Apps>
      {apps.map(({ id, Icon, run, color, tile }) => (
        <AppCell key={id}>
          <AppTile $bg={tile}>
            <Icon />
            <Running $c={run ? color : "transparent"} />
          </AppTile>
        </AppCell>
      ))}
      <AppCell>
        <StackedTile $bg="#3d2e27">
          <QuartusIcon />
          <Running $w={24} $c="#4cc2ff" />
        </StackedTile>
      </AppCell>
    </Apps>
    <Tray>
      <TrayItem $w={32}>
        <svg width="19" height="12" viewBox="0 0 19 12"><path d="M1 10.500l8.500-8.500 8.500 8.500" fill="none" stroke="#fff" strokeWidth="1.400" /></svg>
      </TrayItem>
      <TrayItem $w={37}>
        <svg width="24" height="22" viewBox="0 0 24 22">
          <path d="M7 6q2-5 6-5 5 .5 6 5 2 2 1 5l-7 5z" fill="#8b8784" />
          <path d="M4 16q-4-1-4-4.500Q.5 8 4 7.500 6 4 10 5l6 8-1 3z" fill="#c4c1bf" />
          <path d="M1 13q6-3 12-2l-1 5.500H4q-2-1-3-3.500z" fill="#f5f5f4" />
          <circle cx="17.500" cy="14.500" r="6.700" fill="#f5f9fd" />
          <path d="M13.500 13a4.300 4.300 0 0 1 7.500-1M21.500 16a4.300 4.300 0 0 1-7.500 1.200" fill="none" stroke="#1d74cc" strokeWidth="1.600" />
          <path d="M22 10v3.500h-3.500zM13 19v-3.500h3.500z" fill="#1d74cc" />
        </svg>
      </TrayItem>
      <TrayItem $w={45}>
        <svg width="23" height="21" viewBox="0 0 23 21">
          <path d="M5.700 0l5.700 3.500L5.700 7 0 3.500zM17.200 0L23 3.500 17.200 7l-5.800-3.500zM5.700 7l5.700 3.600-5.700 3.500L0 10.600zM17.200 7L23 10.600l-5.800 3.500-5.800-3.500zM11.400 13.600L17 17l-5.600 3.600L6 17z" fill="#fff" />
        </svg>
      </TrayItem>
      <TrayItem $w={63}>
        <Stack $w={35} $align="center" $ls={-0.2}><span>ENG</span><span>IN</span></Stack>
      </TrayItem>
      <TrayItem $w={36}>
        <svg width="24" height="20" viewBox="0 0 24 20">
          <g fill="none" stroke="#fff" strokeWidth="1.700" strokeLinecap="round">
            <path d="M1 7.500Q12-4 23 7.500M4.500 11Q12 3.500 19.500 11M8 14q4-3.500 8 0" />
          </g>
          <circle cx="12" cy="17" r="2.200" fill="#fff" />
        </svg>
      </TrayItem>
      <TrayItem $w={36}>
        <svg width="25" height="21" viewBox="0 0 25 21">
          <g fill="none" stroke="#fff" strokeWidth="1.700" strokeLinecap="round" strokeLinejoin="round">
            <path d="M1 7v7h4l6 5.500v-18L5 7zM14.500 7q2.500 3.500 0 7M17.500 4.200q4.500 6.300 0 12.600M20.500 1.500q6.500 9 0 18" />
          </g>
        </svg>
      </TrayItem>
      <TrayItem $w={36}>
        <svg width="25" height="18" viewBox="0 0 25 18">
          <rect x="1" y="1.500" width="20" height="14.500" rx="3" fill="none" stroke="#fff" strokeWidth="1.700" />
          <rect x="3.500" y="4" width="5.500" height="9.500" rx="1" fill="#fff" />
          <path d="M22 6q2.500 0 2.500 2.700T22 11.500z" fill="#fff" />
        </svg>
      </TrayItem>
      <TrayItem $w={100} $lift={3}>
        <Stack $align="right" $ls={-0.02}><Tight>21:19</Tight><span>19-12-2022</span></Stack>
      </TrayItem>
      <TrayItem $w={35}>
        <Bell />
      </TrayItem>
    </Tray>
  </TaskBar>
);

const menus = [["File", 45.5, 0.2], ["Edit", 47.5, 0.2], ["View", 54, 0.1], ["Tools", 62.5, 0.4], ["Window", 83, 0.3], ["Help", 50, 0.3]];
const leftTools = [<BackIcon />, <BackIcon flip />, <RefreshIcon />, <PageArrow />, <PageArrow flip />, <BinocularsIcon />];
const rightTools = [<PointerIcon />, <ZoomIcon />, <FitIcon />, <HandIcon />, <SelectIcon />, <SmallHierarchyIcon />,
  <PaletteIcon />, <GearIcon />, <ParrotIcon />, <SwapIcon />, <NetIcon />];

export default function App() {
  return (
    <Desktop>
      <GlobalStyle />
      <TitleBar>
        <RtlIcon />
        <Title>RTL Viewer - C:/intelFPGA_lite/17.1/mux41 - mux41</Title>
        <WindowControls>
          <svg width="16" height="16" viewBox="0 0 16 16"><path d="M0 7.500h15.500" stroke="#000" strokeWidth="1.200" /></svg>
          <svg width="17" height="17" viewBox="0 0 17 17" overflow="visible">
            <rect x=".8" y="3.700" width="10.700" height="10.700" rx="2" fill="none" stroke="#000" strokeWidth="1.400" />
            <path d="M3.500 1h7.500q3.500 0 3.500 3.500v7.500" fill="none" stroke="#000" strokeWidth="1.400" />
          </svg>
          <svg width="17" height="17" viewBox="0 0 17 17"><path d="M1 .5l15 15M16 .5L1 15.500" stroke="#000" strokeWidth="1.400" /></svg>
        </WindowControls>
      </TitleBar>

      <MenuBar>
        <Menus>
          {menus.map(([m, w, ls]) => <MenuItem key={m} $w={w} $ls={ls}>{m}</MenuItem>)}
        </Menus>
        <SearchArea>
          <SearchField>Search altera.com</SearchField>
          <GlobeIcon />
        </SearchArea>
      </MenuBar>

      <ToolBar>
        <ToolGroup>
          <Grip $after={8} />
          {leftTools.map((icon, i) => <ToolButton key={i}>{icon}</ToolButton>)}
        </ToolGroup>
        <ToolGroup>
          <Grip $after={8} />
          {rightTools.map((icon, i) => <ToolButton key={i} $on={i === 0 || i === 5}>{icon}</ToolButton>)}
        </ToolGroup>
        <ToolGroup $open><Grip $after={0} /></ToolGroup>
        <PagePicker>
          <span>Page:</span>
          <PageSelect>
            1 of 1
            <svg width="8" height="5" viewBox="0 0 8 5"><path d="M0 .5h8L4 4.500z" fill="#000" /></svg>
          </PageSelect>
        </PagePicker>
      </ToolBar>

      <WorkArea>
        <Rail>
          <RailGrip />
          <RailButton><BubbleIcon /></RailButton>
        </Rail>
        <Dock>
          <DockHeader>
            <DockTitle>Netlist Navigator</DockTitle>
            <DockButton $w={16} $on>
              <svg width="9" height="11" viewBox="0 0 9 11"><path d="M2.500 7V.700h4.500V7M0.500 7h8M4.500 7v4" fill="none" stroke="#000" strokeWidth="1.100" /><path d="M6.500 1v6" stroke="#000" strokeWidth="1.600" /></svg>
            </DockButton>
            <DockButton $w={15}>
              <svg width="9" height="9" viewBox="0 0 9 9"><path d="M2.500 3V1h6v4.500h-2M.5 4h6v4.500h-6z" fill="none" stroke="#000" /><path d="M2 1h7M0 3.800h7" stroke="#000" strokeWidth="1.600" /></svg>
            </DockButton>
            <DockButton $w={15}>
              <svg width="7" height="7" viewBox="0 0 7 7"><path d="M.8.800l5 5M5.800.800l-5 5" stroke="#000" strokeWidth="1.500" /></svg>
            </DockButton>
          </DockHeader>
          <TreeRow>
            <svg width="9" height="14" viewBox="0 0 9 14"><path d="M1 1l6.500 6L1 13" fill="none" stroke="#969696" strokeWidth="1.500" /></svg>
            <TreeIcon><HierarchyIcon /></TreeIcon>
            <span>mux41</span>
          </TreeRow>
        </Dock>
        <Editor>
          <TabBar>
            <Tab><RtlIcon /><span>mux41:1</span></Tab>
            <AddTab>
              <svg width="11" height="11" viewBox="0 0 11 11"><path d="M0 5.500h11M5.500 0v11" stroke="#0b4f86" strokeWidth="1.800" /></svg>
            </AddTab>
          </TabBar>
          <Viewport>
            <Canvas><Schematic /></Canvas>
            <VScroll><Triangle dir="up" /><Triangle dir="down" /></VScroll>
          </Viewport>
          <HScroll><Triangle dir="left" /><Triangle dir="right" /></HScroll>
        </Editor>
      </WorkArea>

      <StatusBar>
        <StatusCell $w={83} $ls={1.2} $line>100%</StatusCell>
        <StatusCell $w={80} $ls={0.7}>00:00:02</StatusCell>
      </StatusBar>

      <Taskbar />
    </Desktop>
  );
}
